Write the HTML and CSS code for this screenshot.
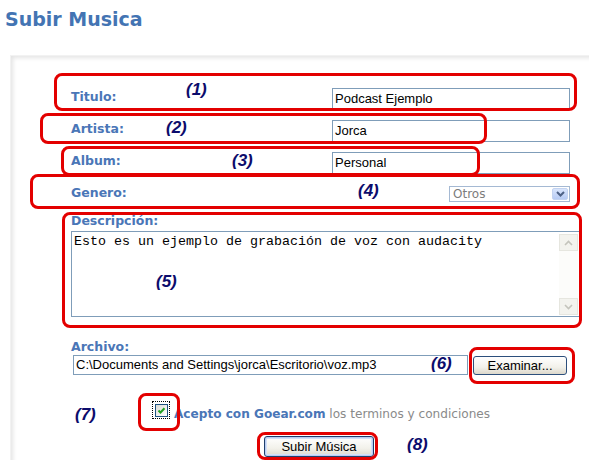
FILE: index.html
```html
<!DOCTYPE html>
<html lang="es">
<head>
<meta charset="utf-8">
<title>Subir Musica</title>
<link rel="stylesheet" href="styles.css">
</head>
<body>
<div class="page">
  <h1 class="title">Subir Musica</h1>
  <div class="panel">
    <form class="form">
      <div class="row">
        <label class="lbl">Titulo:</label>
        <div class="field">Podcast Ejemplo</div>
      </div>
      <div class="row">
        <label class="lbl">Artista:</label>
        <div class="field">Jorca</div>
      </div>
      <div class="row">
        <label class="lbl">Album:</label>
        <div class="field">Personal</div>
      </div>
      <div class="row">
        <label class="lbl">Genero:</label>
        <div class="select">
          <span class="select-text">Otros</span>
          <span class="select-btn">
            <svg width="9" height="6" viewBox="0 0 9 6"><path d="M1 1 L4.5 4.5 L8 1" fill="none" stroke="#4d6185" stroke-width="2"/></svg>
          </span>
        </div>
      </div>
      <label class="lbl block desc-lbl">Descripción:</label>
      <div class="textarea">
        <div class="ta-text">Esto es un ejemplo de grabación de voz con audacity</div>
        <div class="scroll">
          <span class="sbtn"><svg width="9" height="6" viewBox="0 0 9 6"><path d="M1 5 L4.5 1.5 L8 5" fill="none" stroke="#c4c4bc" stroke-width="1.6"/></svg></span>
          <span class="strack"></span>
          <span class="sbtn"><svg width="9" height="6" viewBox="0 0 9 6"><path d="M1 1 L4.5 4.5 L8 1" fill="none" stroke="#c4c4bc" stroke-width="1.6"/></svg></span>
        </div>
      </div>
      <label class="lbl block file-lbl">Archivo:</label>
      <div class="file-row">
        <div class="file-field">C:\Documents and Settings\jorca\Escritorio\voz.mp3</div>
        <span class="btn browse">Examinar...</span>
      </div>
      <div class="check-row">
        <span class="focus">
          <span class="checkbox">
            <svg width="11" height="11" viewBox="0 0 11 11"><path d="M2.5 5.5 L4.5 7.5 L8.5 3.2" fill="none" stroke="#21a121" stroke-width="2"/></svg>
          </span>
        </span>
        <span class="terms"><b class="terms-b">Acepto con Goear.com</b> los terminos y condiciones</span>
      </div>
      <div class="submit-row">
        <span class="btn submit">Subir Música</span>
      </div>
    </form>
  </div>

  <div class="mark m1"></div>
  <div class="mark m2"></div>
  <div class="mark m3"></div>
  <div class="mark m4"></div>
  <div class="mark m5"></div>
  <div class="mark m6"></div>
  <div class="mark m7"></div>
  <div class="mark m8"></div>

  <span class="num n1">(1)</span>
  <span class="num n2">(2)</span>
  <span class="num n3">(3)</span>
  <span class="num n4">(4)</span>
  <span class="num n5">(5)</span>
  <span class="num n6">(6)</span>
  <span class="num n7">(7)</span>
  <span class="num n8">(8)</span>
</div>
</body>
</html>
```
FILE: styles.css
```css
html, body {
  margin: 0;
  padding: 0;
  background: #ffffff;
}
.page {
  position: relative;
  width: 589px;
  height: 460px;
  overflow: hidden;
  font-family: "DejaVu Sans", Verdana, sans-serif;
}
.title {
  margin: 0;
  padding: 8px 0 0 5px;
  font-size: 19px;
  line-height: 22px;
  font-weight: bold;
  color: #4374b3;
}
.panel {
  margin: 25px 0 0 10px;
  padding: 32px 0 0 60px;
  height: 380px;
  box-shadow: inset 3px 3px 4px -1px #e4e4e4;
  border-top: 1px solid #f2f2f2;
  border-left: 1px solid #f2f2f2;
}
.form {
  display: flex;
  flex-direction: column;
}
.row {
  display: grid;
  grid-template-columns: 261px 238px;
  height: 22px;
  margin-bottom: 10px;
}
.lbl {
  font-size: 12.5px;
  line-height: 15px;
  font-weight: bold;
  color: #4a76b7;
  margin-top: 1px;
  align-self: start;
}
.lbl.block {
  display: block;
}
.field {
  box-sizing: border-box;
  height: 22px;
  border: 1px solid #7f9db9;
  font-family: "Liberation Sans", Arial, sans-serif;
  font-size: 13px;
  line-height: 20px;
  padding-left: 2px;
  color: #000;
}
.select {
  justify-self: end;
  align-self: start;
  margin-top: 2px;
  box-sizing: border-box;
  width: 121px;
  height: 16px;
  border: 1px solid #a5b9d3;
  display: flex;
  align-items: center;
  justify-content: space-between;
  padding: 0 1px 0 3px;
}
.select-text {
  font-family: "DejaVu Sans", Verdana, sans-serif;
  font-size: 12px;
  line-height: 14px;
  color: #7c7c7c;
}
.select-btn {
  width: 16px;
  height: 12px;
  background: linear-gradient(#d9e5fc, #b7cbf4);
  border: 1px solid #c3d3f0;
  border-radius: 2px;
  display: flex;
  align-items: center;
  justify-content: center;
  box-sizing: border-box;
}
.desc-lbl {
  margin-top: -3px;
}
.textarea {
  margin-top: 3px;
  box-sizing: border-box;
  width: 509px;
  height: 86px;
  border: 1px solid #7f9db9;
  display: flex;
  justify-content: space-between;
}
.ta-text {
  font-family: "Liberation Mono", "Courier New", monospace;
  font-size: 13.33px;
  line-height: 15px;
  padding: 2px 0 0 2px;
  color: #000;
}
.scroll {
  width: 19px;
  margin: 2px 1px 1px 0;
  display: flex;
  flex-direction: column;
  background: #fcfcfa;
}
.sbtn {
  box-sizing: border-box;
  height: 17px;
  border: 1px solid #e6e6df;
  background: #f3f3ee;
  display: flex;
  align-items: center;
  justify-content: center;
}
.strack {
  flex: 1;
}
.file-lbl {
  margin-top: 22px;
}
.file-row {
  display: flex;
  align-items: flex-start;
  margin-top: 1px;
  padding-left: 2px;
}
.file-field {
  box-sizing: border-box;
  width: 395px;
  height: 20px;
  border: 1px solid #7f9db9;
  font-family: "Liberation Sans", Arial, sans-serif;
  font-size: 13px;
  line-height: 18px;
  padding-left: 2px;
}
.btn {
  box-sizing: border-box;
  display: inline-flex;
  align-items: center;
  justify-content: center;
  font-family: "Liberation Sans", Arial, sans-serif;
  font-size: 13px;
  color: #000;
  border: 1px solid #2c4f7c;
  border-radius: 3px;
  background: linear-gradient(#ffffff, #f2f1ea 60%, #dcd8cc);
}
.browse {
  width: 94px;
  height: 19px;
  margin: 1px 0 0 5px;
}
.check-row {
  display: flex;
  align-items: flex-start;
  margin-top: 25px;
  padding-left: 81px;
  height: 22px;
}
.focus {
  box-sizing: border-box;
  width: 18px;
  height: 18px;
  border: 1px dotted #000;
  display: flex;
  align-items: center;
  justify-content: center;
  margin-top: 1px;
}
.checkbox {
  box-sizing: border-box;
  width: 13px;
  height: 13px;
  border: 1px solid #1c5180;
  background: linear-gradient(135deg, #dcdcd6, #ffffff);
  display: flex;
  align-items: center;
  justify-content: center;
}
.terms {
  margin: 6px 0 0 4px;
  font-size: 12.1px;
  line-height: 16px;
  color: #8a8a8a;
}
.terms-b {
  color: #4a76b7;
}
.submit-row {
  padding-left: 193px;
  margin-top: 14px;
}
.submit {
  width: 110px;
  height: 21px;
  border-color: #1f3f6e;
  box-shadow: inset 0 0 0 1px #b9cdf2, inset 0 0 0 2px #d3e0f8;
}
.mark {
  position: absolute;
  box-sizing: border-box;
  border: 3px solid #e30000;
  border-radius: 8px;
}
.m1 { left: 54px; top: 73px; width: 523px; height: 38px; }
.m2 { left: 40px; top: 113px; width: 447px; height: 31px; }
.m3 { left: 61px; top: 146px; width: 419px; height: 30px; }
.m4 { left: 30px; top: 174px; width: 550px; height: 35px; }
.m5 { left: 62px; top: 212px; width: 520px; height: 116px; }
.m6 { left: 469px; top: 347px; width: 106px; height: 37px; }
.m7 { left: 138px; top: 393px; width: 42px; height: 38px; }
.m8 { left: 257px; top: 432px; width: 121px; height: 28px; }
.num {
  position: absolute;
  font-family: "Liberation Sans", Arial, sans-serif;
  font-size: 17px;
  line-height: 17px;
  font-weight: bold;
  font-style: italic;
  color: #0c0c6c;
}
.n1 { left: 186px; top: 81px; }
.n2 { left: 166px; top: 119px; }
.n3 { left: 232px; top: 152px; }
.n4 { left: 358px; top: 182px; }
.n5 { left: 156px; top: 273px; }
.n6 { left: 431px; top: 355px; }
.n7 { left: 75px; top: 406px; }
.n8 { left: 407px; top: 436px; }
```
